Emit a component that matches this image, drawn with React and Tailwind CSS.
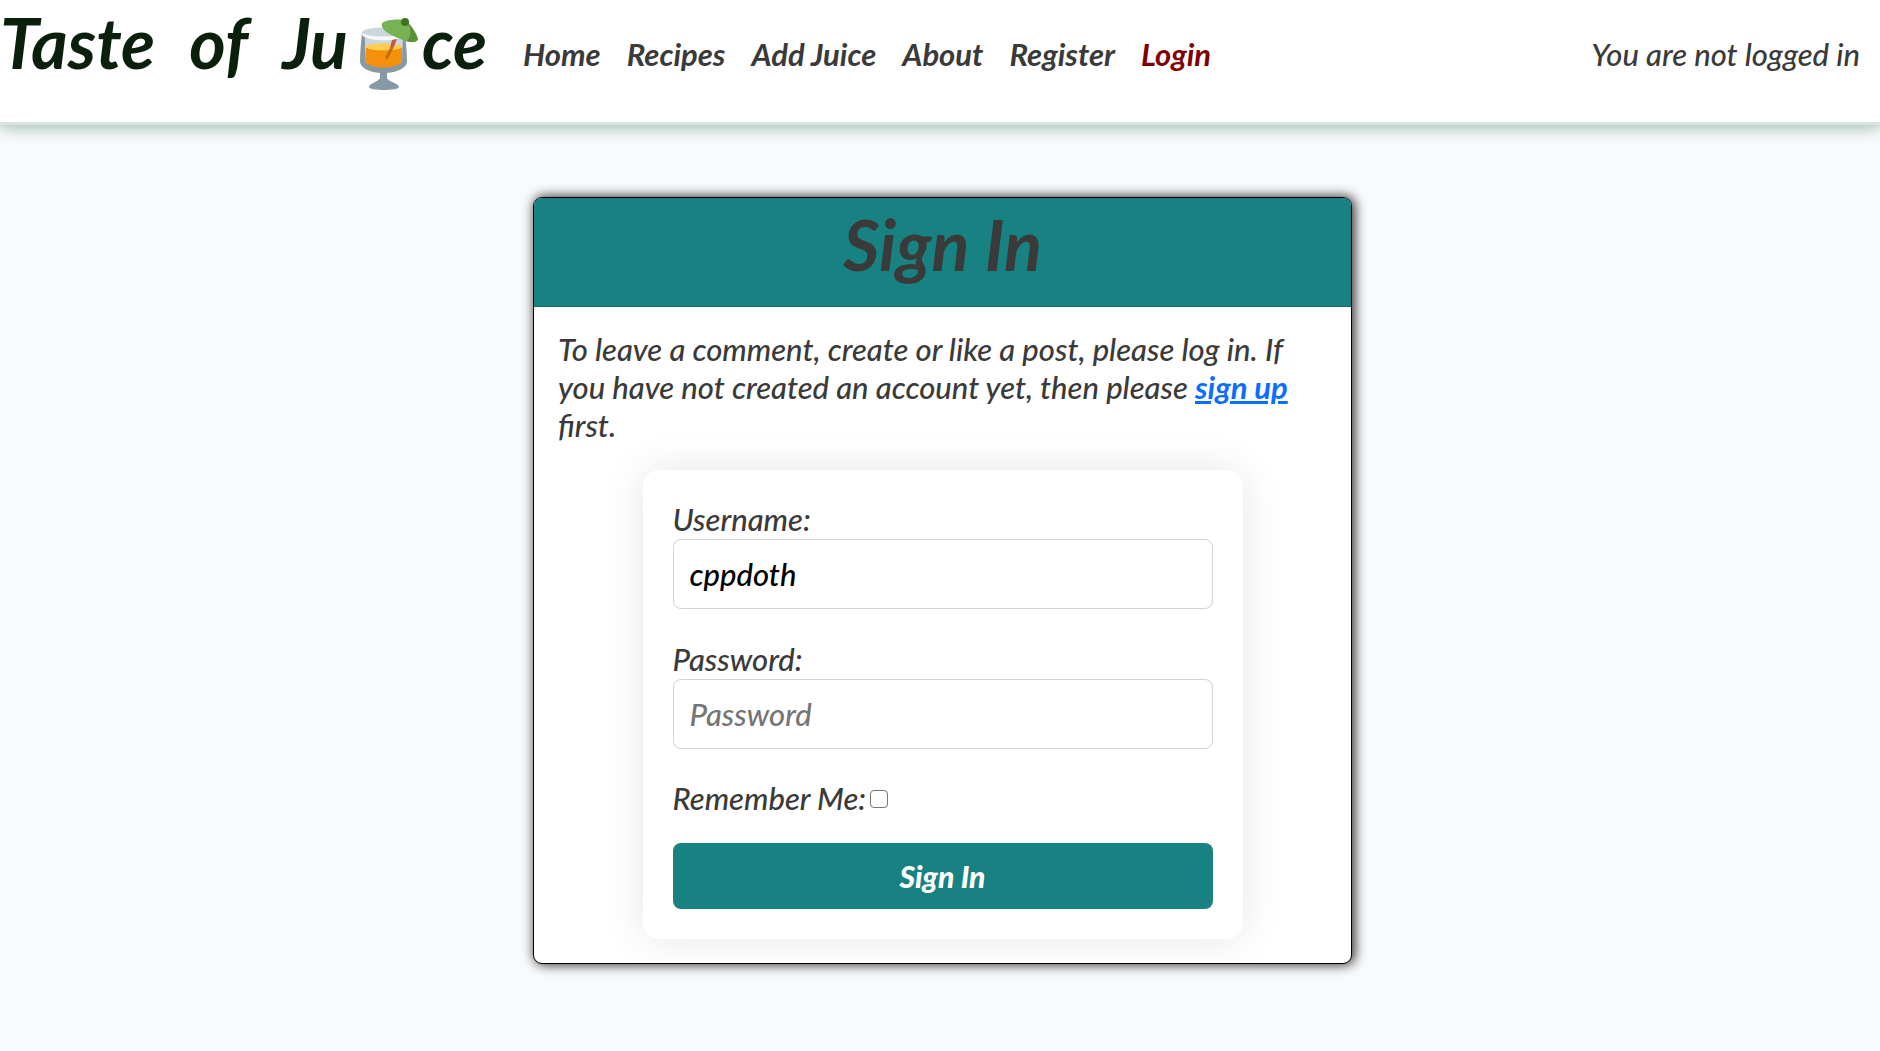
const navLinks = ["Home", "Recipes", "Add Juice", "About", "Register", "Login"];

function JuiceGlass() {
  return (
    <svg viewBox="0 0 58 72" className="mt-[18px] h-[72px] w-[58px] shrink-0" aria-hidden="true">
      <path
        d="M2 14 C1 25 0 35 0 43 C0 50 9 54 20 55 V60 C19 64 9 65 9 69 C9 71 16 72 24 72 C32 72 39 71 39 69 C39 65 28 64 27 60 V55 C38 54 47 50 47 43 C47 35 46 25 45 14 Z"
        fill="#8899a6"
      />
      <path d="M5 16 H43 L42 43 C42 49 5 49 5 43 Z" fill="#ccd6dd" />
      <ellipse cx="23.500" cy="16" rx="21.500" ry="6.500" fill="#f5f8fa" />
      <ellipse cx="23.500" cy="14" rx="21" ry="4.500" fill="#ccd6dd" />
      <path d="M6 29 H42 V42 C41 52 6 52 5 42 Z" fill="#f4900c" />
      <ellipse cx="24" cy="29" rx="18" ry="3.500" fill="#ffcc4d" />
      <path d="M32 22 L37 21 L33 31 L30 30 Z" fill="#be5a4a" />
      <path d="M30 30 L33 31 L28 40 Q25 43 26 38 Z" fill="#c26b0d" />
      <path d="M22 5 C27 1 39 1 45 2 C52 8 56 15 58 21 C57 25 50 25 43 22 C33 18 20 13 22 5 Z" fill="#77b255" />
      <path d="M46 3 C52 8 56 15 58 21 C57 24 52 25 46 23 C53 18 51 9 46 3 Z" fill="#5c913b" />
      <circle cx="45" cy="4" r="4" fill="#3e721d" />
    </svg>
  );
}

function Header() {
  return (
    <header className="flex h-[125px] items-start border-b-[3px] border-[#d9e4e0] bg-white shadow-[0_2px_14px_1px_#a3beb0]">
      <a
        href="#"
        aria-label="Taste of Juice"
        className="flex w-[487px] shrink-0 items-start justify-between whitespace-nowrap text-[70px] leading-[84px] font-bold text-[#0a200d]"
      >
        <span>Taste</span>
        <span>of</span>
        <span className="flex gap-1">
          <span className="pr-2">Ju</span>
          <JuiceGlass />
          <span>ce</span>
        </span>
      </a>
      <nav className="mt-[35px] ml-9 flex gap-[26px] text-[31px] font-bold whitespace-nowrap">
        {navLinks.map((name) => (
          <a key={name} href="#" className={name === "Login" ? "text-[#800000]" : ""}>
            {name}
          </a>
        ))}
      </nav>
      <p className="mt-[35px] mr-5 ml-auto whitespace-nowrap">You are not logged in</p>
    </header>
  );
}

const fieldClass =
  "block h-[70px] w-full rounded-lg border border-[#ced4da] bg-white px-4 text-black placeholder:text-[#757575]";

function SignInForm() {
  return (
    <form
      onSubmit={(e) => e.preventDefault()}
      className="mx-auto mt-[26px] w-full max-w-[600px] rounded-2xl bg-white p-[30px] shadow-[0_0_40px_rgba(0,0,0,0.1)]"
    >
      <label htmlFor="username" className="block pb-px">
        Username:
      </label>
      <input id="username" type="text" defaultValue="cppdoth" placeholder="Username" className={fieldClass} />
      <label htmlFor="password" className="mt-[31px] block pb-px">
        Password:
      </label>
      <input id="password" type="password" placeholder="Password" className={fieldClass} />
      <div className="mt-[30px] flex items-center gap-1 leading-[39px]">
        <label htmlFor="remember">Remember Me:</label>
        <input
          id="remember"
          type="checkbox"
          className="size-[18px] appearance-none rounded-[4px] border border-[#767676] bg-white checked:bg-[#188181]"
        />
      </div>
      <button type="submit" className="mt-[25px] block h-[66px] w-full rounded-lg bg-[#188181] text-[30px] font-black text-white">
        Sign In
      </button>
    </form>
  );
}

export default function App() {
  return (
    <div className="min-h-screen bg-slate-50 font-['Lato',sans-serif] text-[31px] leading-[38px] font-medium text-[#3a3a3a] italic">
      <Header />
      <main className="pt-[72px] pb-20 pl-[5px]">
        <section className="mx-auto w-full max-w-[819px] overflow-hidden rounded-[9px] border border-black bg-white shadow-[2px_0_12px_1px_#333]">
          <h1 className="h-[109px] border-b border-[#146d6d] bg-[#188181] text-center text-[70px] leading-[92px] font-bold">
            Sign In
          </h1>
          <div className="px-6 pt-[23px] pb-6">
            <p>
              To leave a comment, create or like a post, please log in. If you have not created an account yet, then
              please{" "}
              <a href="#" className="font-bold text-[#0d6efd] underline">
                sign up
              </a>{" "}
              first.
            </p>
            <SignInForm />
          </div>
        </section>
      </main>
    </div>
  );
}
